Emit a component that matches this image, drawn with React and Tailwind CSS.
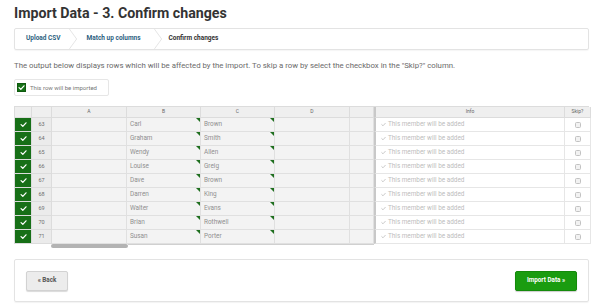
import React from "react";

const rows = [
  [63, "Carl", "Brown"],
  [64, "Graham", "Smith"],
  [65, "Wendy", "Allen"],
  [66, "Louise", "Greig"],
  [67, "Dave", "Brown"],
  [68, "Darren", "King"],
  [69, "Walter", "Evans"],
  [70, "Brian", "Rothwell"],
  [71, "Susan", "Porter"],
];

function Check({ className = "", color = "white", w = 2 }) {
  return (
    <svg viewBox="0 0 10 10" className={className}>
      <path d="M1.5 5.2 L4 7.6 L8.6 2.6" fill="none" stroke={color} strokeWidth={w} strokeLinecap="round" strokeLinejoin="round" />
    </svg>
  );
}

function Tri() {
  return (
    <span className="absolute top-0 right-0 w-0 h-0 border-t-[4px] border-l-[4px] border-t-[#1f6f1f] border-l-transparent" />
  );
}

const cols = "grid-cols-[17px_20px_75px_74px_74px_75px_24px_191px_26px]";

export default function App() {
  return (
    <div className="w-[600px] h-[308px] bg-white overflow-hidden pl-[14px] pr-[11px] pt-[4px] font-['Roboto',sans-serif]">
      <h1 className="text-[14.2px] leading-[18px] font-bold text-[#333]">
        Import Data - 3. Confirm changes
      </h1>

      <div className="mt-[6px] h-[22px] border border-[#e3e3e3] rounded-[2px] flex items-stretch text-[6.5px] font-bold shadow-[0_1px_1px_rgba(0,0,0,0.04)]">
        <div className="flex items-center pl-[11px] pr-[8px] text-[#2d5f7f]">Upload CSV</div>
        <svg viewBox="0 0 10 22" className="w-[9px] h-full shrink-0">
          <path d="M0.5 0 L8.5 11 L0.5 22" fill="none" stroke="#e2e2e2" strokeWidth="1" />
        </svg>
        <div className="flex items-center pl-[9px] pr-[13px] text-[#2d5f7f]">Match up columns</div>
        <svg viewBox="0 0 10 22" className="w-[9px] h-full shrink-0">
          <path d="M0.5 0 L8.5 11 L0.5 22" fill="none" stroke="#e2e2e2" strokeWidth="1" />
        </svg>
        <div className="flex items-center pl-[6px] text-[#333]">Confirm changes</div>
      </div>

      <p className="mt-[11px] text-[7.8px] leading-[10px] text-[#6a6a6a]">
        The output below displays rows which will be affected by the import. To skip a row by select the checkbox in the "Skip?" column.
      </p>

      <div className="mt-[8px] w-[95px] h-[17px] border border-[#e6e6e6] rounded-[2px] flex items-center pl-[2px] gap-[4px]">
        <div className="w-[9px] h-[9px] bg-[#167016] border border-[#0f5a0f] flex items-center justify-center">
          <Check className="w-[7px] h-[7px]" w={1.8} />
        </div>
        <span className="text-[6px] text-[#777]">This row will be imported</span>
      </div>

      <div className="mt-[10px] relative">
        <div className={`grid ${cols} border-t border-l border-[#dcdcdc] text-[6.4px]`}>
          {["", "", "A", "B", "C", "D", "", "Info", "Skip?"].map((h, i) => (
            <div
              key={"h" + i}
              className={`h-[11px] bg-[#efefef] border-r border-b border-[#dcdcdc] flex items-center justify-center text-[5px] text-[#666] ${i === 7 ? "border-l-2 border-l-[#c8c8c8]" : ""}`}
            >
              {h}
            </div>
          ))}
          {rows.map(([n, first, last]) => (
            <React.Fragment key={n}>
              <div className="h-[14px] bg-[#176f17] border-r border-b border-[#dcdcdc] flex items-center justify-center">
                <Check className="w-[7px] h-[7px]" w={1.8} />
              </div>
              <div className="h-[14px] bg-[#ebebeb] border-r border-b border-[#dcdcdc] flex items-center justify-center text-[5.5px] text-[#6f6f6f]">
                {n}
              </div>
              <div className="h-[14px] bg-[#f3f3f3] border-r border-b border-[#e0e0e0]" />
              <div className="relative h-[14px] bg-[#f3f3f3] border-r border-b border-[#e0e0e0] flex items-center pl-[3px] text-[#8f8f8f]">
                {first}
                <Tri />
              </div>
              <div className="relative h-[14px] bg-[#f3f3f3] border-r border-b border-[#e0e0e0] flex items-center pl-[3px] text-[#8f8f8f]">
                {last}
                <Tri />
              </div>
              <div className="h-[14px] bg-[#f3f3f3] border-r border-b border-[#e0e0e0]" />
              <div className="h-[14px] bg-[#f3f3f3] border-r border-b border-[#e0e0e0]" />
              <div className="h-[14px] bg-white border-r border-b border-[#e6e6e6] border-l-2 border-l-[#c8c8c8] flex items-center pl-[5px] gap-[2px] text-[#bdbdbd]">
                <Check className="w-[5px] h-[5px]" color="#c4c4c4" w={1.8} />
                This member will be added
              </div>
              <div className="h-[14px] bg-white border-r border-b border-[#e6e6e6] flex items-center justify-center">
                <span className="w-[6px] h-[6px] rounded-[1.5px] border border-[#c2c2c2] bg-[#f2f2f2]" />
              </div>
            </React.Fragment>
          ))}
        </div>
        <div className="flex">
          <div className="w-[37px]" />
          <div className="w-[77px] h-[4px] rounded-[2px] bg-[#b3b3b3]" />
          <div className="w-[246px] h-[2px] border-t border-[#d0d0d0]" />
        </div>
      </div>

      <div className="mt-[11px] h-[43px] border border-[#e3e3e3] rounded-[2px] flex items-center justify-between px-[11px] shadow-[0_1px_1px_rgba(0,0,0,0.05)]">
        <button className="w-[42px] h-[20px] bg-[#ececec] border border-[#d2d2d2] rounded-[2px] shadow-[0_1px_1px_rgba(0,0,0,0.15)] text-[6.3px] font-bold text-[#555]">
          « Back
        </button>
        <button className="w-[62px] h-[20px] bg-[#1a9c10] border border-[#148a0b] rounded-[2px] shadow-[0_1px_1px_rgba(0,0,0,0.2)] text-[6.3px] font-bold text-white">
          Import Data »
        </button>
      </div>
    </div>
  );
}
